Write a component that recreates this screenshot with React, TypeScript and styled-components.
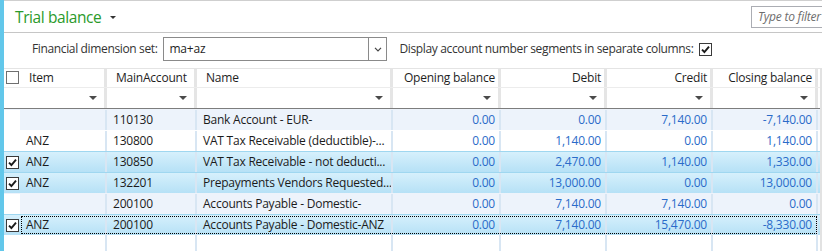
import React, { FC } from 'react'
import styled, { createGlobalStyle } from 'styled-components'

const GlobalStyle = createGlobalStyle`
    html, body {
        margin: 0;
        padding: 0;
        background: #ffffff;
    }
    body {
        font-family: "Open Sans", "Noto Sans", sans-serif;
        font-size: 12px;
        letter-spacing: -0.22px;
        color: #1e1e1e;
    }
`

const Page = styled.div`
    width: 822px;
    height: 251px;
    box-sizing: border-box;
    overflow: hidden;
    display: flex;
    flex-direction: column;
    border-left: 4px solid #62c7ea;
    background: #ffffff;
`

const TitleBar = styled.div`
    height: 33px;
    box-sizing: border-box;
    flex: 0 0 auto;
    display: flex;
    align-items: center;
    padding-left: 11px;
    border-top: 1px solid #cfcfcf;
    border-bottom: 1px solid #c6c6c6;
`

const Title = styled.span`
    font-size: 15.5px;
    letter-spacing: -0.4px;
    color: #2b9a2b;
    line-height: 20px;
`

const Caret = styled.span`
    width: 0;
    height: 0;
    margin-left: 9px;
    margin-top: 2px;
    border-left: 3px solid transparent;
    border-right: 3px solid transparent;
    border-top: 3px solid #333333;
`

const SearchBox = styled.div`
    margin-left: auto;
    width: 71px;
    height: 22px;
    box-sizing: border-box;
    border: 1px solid #abadb3;
    border-right: none;
    padding-left: 6px;
    font-style: italic;
    color: #6d6d6d;
    line-height: 20px;
    white-space: nowrap;
    overflow: hidden;
`

const OptionsRow = styled.div`
    height: 35px;
    box-sizing: border-box;
    flex: 0 0 auto;
    display: flex;
    align-items: flex-start;
    padding: 4px 0 0 28px;
`

const Label = styled.span<{ $gap?: number }>`
    line-height: 24px;
    letter-spacing: -0.36px;
    color: #333333;
    margin-left: ${props => props.$gap || 0}px;
    white-space: nowrap;
`

const Combo = styled.div`
    width: 224px;
    height: 24px;
    box-sizing: border-box;
    margin-left: 6px;
    display: flex;
    border: 1px solid #8a8a8a;
`

const ComboText = styled.div`
    flex: 1;
    padding-left: 5px;
    line-height: 22px;
    color: #1e1e1e;
`

const ComboButton = styled.div`
    width: 17px;
    display: flex;
    align-items: center;
    justify-content: center;
    border-left: 1px solid #8a8a8a;
`

const OptionCheck = styled.div`
    height: 24px;
    display: flex;
    align-items: center;
    margin-left: 6px;
`

const Grid = styled.div`
    flex: 1;
    width: 816px;
    display: flex;
    flex-direction: column;
    border-right: 2px solid #e2e2e2;
`

const HeaderRow = styled.div`
    display: flex;
    height: 19px;
    box-sizing: border-box;
    border-top: 1px solid #e4e4e4;
`

const FilterRow = styled.div`
    display: flex;
    height: 22px;
    box-sizing: border-box;
    border-top: 1px solid #ececec;
    border-bottom: 1px solid #7d7d7d;
`

const CheckCell = styled.div<{ $top?: boolean }>`
    flex: 0 0 16px;
    display: flex;
    align-items: center;
    padding-left: 2px;
    box-sizing: border-box;
    margin-top: ${props => props.$top ? -1 : 0}px;
`

const HeaderCell = styled.div<{ $width: number; $right: boolean }>`
    flex: 0 0 ${props => props.$width}px;
    box-sizing: border-box;
    border-right: 3px solid #e5e5e5;
    padding: 0 ${props => props.$right ? 3 : 8}px 0 ${props => props.$right ? 6 : 9}px;
    text-align: ${props => props.$right ? 'right' : 'left'};
    line-height: 17px;
    white-space: nowrap;
    overflow: hidden;
`

const FilterCell = styled.div<{ $width: number }>`
    flex: 0 0 ${props => props.$width}px;
    box-sizing: border-box;
    border-right: 3px solid #e5e5e5;
    display: flex;
    align-items: center;
    justify-content: flex-end;
    padding-right: 7px;
`

const FilterArrow = styled.span`
    width: 0;
    height: 0;
    border-left: 4px solid transparent;
    border-right: 4px solid transparent;
    border-top: 4px solid #4a4a4a;
`

const Row = styled.div<{ $selected: boolean; $alt: boolean }>`
    display: flex;
    height: 21px;
    box-sizing: border-box;
    border-top: 1px solid ${props => props.$selected ? '#9fd7f0' : 'transparent'};
    background: ${props => props.$selected
		? 'linear-gradient(to bottom, #d6f0fc, #b6e1f6)'
		: props.$alt ? '#edf3fb' : '#ffffff'};
`

const RowCheckCell = styled(CheckCell)<{ $selected: boolean }>`
    background: ${props => props.$selected ? 'transparent' : '#ffffff'};
`

const RowCells = styled.div<{ $focused: boolean }>`
    display: flex;
    outline: ${props => props.$focused ? '1px dotted #000000' : 'none'};
    outline-offset: -2px;
`

const Cell = styled.div<{ $width: number; $right: boolean; $number: boolean }>`
    flex: 0 0 ${props => props.$width}px;
    box-sizing: border-box;
    border-right: 2px solid #d8e6f3;
    padding: 0 ${props => props.$right ? 4 : 6}px;
    text-align: ${props => props.$right ? 'right' : 'left'};
    color: ${props => props.$number ? '#2a6bc9' : '#1b1b1b'};
    line-height: 19px;
    white-space: nowrap;
    overflow: hidden;
`

const EmptyRow = styled.div`
    flex: 1;
    display: flex;
`

const CheckBox = styled.span<{ $dark?: boolean }>`
    display: inline-flex;
    align-items: center;
    justify-content: center;
    width: 13px;
    height: 13px;
    box-sizing: border-box;
    border: 1px solid ${props => props.$dark ? '#3a3a3a' : '#6f6f6f'};
    background: #ffffff;
`

const Check: FC<{ checked?: boolean; dark?: boolean }> = ({ checked, dark }) => (
	<CheckBox $dark={dark}>
		{checked && (
			<svg width="9" height="9" viewBox="0 0 9 9">
				<path d="M1 4.6 L3.4 7 L8 1.6" stroke="#1a1a1a" strokeWidth="1.9" fill="none" />
			</svg>
		)}
	</CheckBox>
)

interface Line {
	item: string;
	account: string;
	name: string;
	opening: string;
	debit: string;
	credit: string;
	closing: string;
	selected?: boolean;
	focused?: boolean;
}

interface Column {
	key: keyof Line;
	title: string;
	width: number;
	right: boolean;
}

const columns: Column[] = [
	{ key: 'item', title: 'Item', width: 87, right: false },
	{ key: 'account', title: 'MainAccount', width: 90, right: false },
	{ key: 'name', title: 'Name', width: 196, right: false },
	{ key: 'opening', title: 'Opening balance', width: 108, right: true },
	{ key: 'debit', title: 'Debit', width: 106, right: true },
	{ key: 'credit', title: 'Credit', width: 106, right: true },
	{ key: 'closing', title: 'Closing balance', width: 105, right: true },
]

const lines: Line[] = [
	{ item: '', account: '110130', name: 'Bank Account - EUR-', opening: '0.00', debit: '0.00', credit: '7,140.00', closing: '-7,140.00' },
	{ item: 'ANZ', account: '130800', name: 'VAT Tax Receivable (deductible)-...', opening: '0.00', debit: '1,140.00', credit: '0.00', closing: '1,140.00' },
	{ item: 'ANZ', account: '130850', name: 'VAT Tax Receivable - not deducti...', opening: '0.00', debit: '2,470.00', credit: '1,140.00', closing: '1,330.00', selected: true },
	{ item: 'ANZ', account: '132201', name: 'Prepayments Vendors Requested...', opening: '0.00', debit: '13,000.00', credit: '0.00', closing: '13,000.00', selected: true },
	{ item: '', account: '200100', name: 'Accounts Payable - Domestic-', opening: '0.00', debit: '7,140.00', credit: '7,140.00', closing: '0.00' },
	{ item: 'ANZ', account: '200100', name: 'Accounts Payable - Domestic-ANZ', opening: '0.00', debit: '7,140.00', credit: '15,470.00', closing: '-8,330.00', selected: true, focused: true },
]

const App: FC = () => (
	<Page>
		<GlobalStyle />
		<TitleBar>
			<Title>Trial balance</Title>
			<Caret />
			<SearchBox>Type to filter</SearchBox>
		</TitleBar>
		<OptionsRow>
			<Label>Financial dimension set:</Label>
			<Combo>
				<ComboText>ma+az</ComboText>
				<ComboButton>
					<svg width="8" height="5" viewBox="0 0 8 5">
						<path d="M1 0.8 L4 3.8 L7 0.8" stroke="#444444" strokeWidth="1.2" fill="none" />
					</svg>
				</ComboButton>
			</Combo>
			<Label $gap={12}>Display account number segments in separate columns:</Label>
			<OptionCheck>
				<Check checked dark />
			</OptionCheck>
		</OptionsRow>
		<Grid>
			<HeaderRow>
				<CheckCell $top>
					<Check />
				</CheckCell>
				{columns.map(col => (
					<HeaderCell key={col.key} $width={col.width} $right={col.right}>
						{col.title}
					</HeaderCell>
				))}
			</HeaderRow>
			<FilterRow>
				<CheckCell />
				{columns.map(col => (
					<FilterCell key={col.key} $width={col.width}>
						<FilterArrow />
					</FilterCell>
				))}
			</FilterRow>
			{lines.map((line, i) => (
				<Row key={i} $selected={!!line.selected} $alt={i % 2 === 0}>
					<RowCheckCell $selected={!!line.selected}>
						{line.selected && <Check checked dark />}
					</RowCheckCell>
					<RowCells $focused={!!line.focused}>
						{columns.map(col => (
							<Cell key={col.key} $width={col.width} $right={col.right} $number={col.right}>
								{line[col.key]}
							</Cell>
						))}
					</RowCells>
				</Row>
			))}
			<EmptyRow>
				<CheckCell />
				{columns.map(col => (
					<Cell key={col.key} $width={col.width} $right={col.right} $number={false} />
				))}
			</EmptyRow>
		</Grid>
	</Page>
)

export default App
